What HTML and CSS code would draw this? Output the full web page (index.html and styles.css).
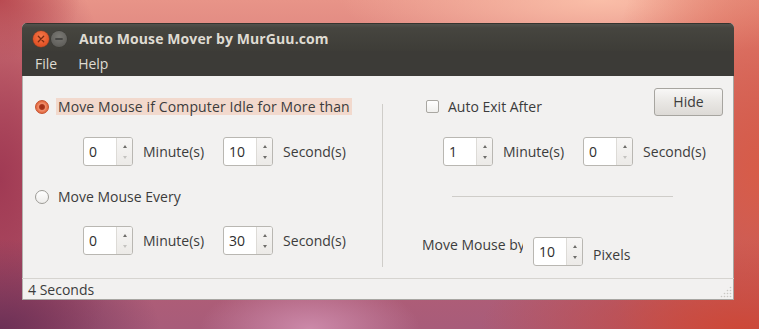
FILE: index.html
```html
<!DOCTYPE html>
<html>
<head>
<meta charset="utf-8">
<link rel="stylesheet" href="styles.css">
</head>
<body>
<div class="window">
  <div class="titlebar">
    <span class="wbtn close"><svg width="16" height="16" viewBox="0 0 16 16"><path d="M5.3 5.3 L10.7 10.7 M10.7 5.3 L5.3 10.7" stroke="#7a2a10" stroke-width="1.3" stroke-linecap="round"/></svg></span>
    <span class="wbtn min"><svg width="16" height="16" viewBox="0 0 16 16"><path d="M4.8 8 H11.2" stroke="#3a3a38" stroke-width="1.4" stroke-linecap="round"/></svg></span>
    <span class="title">Auto Mouse Mover by MurGuu.com</span>
  </div>
  <div class="menubar">
    <span class="menu">File</span>
    <span class="menu">Help</span>
  </div>
  <div class="content">
    <div class="left">
      <div class="opt">
        <span class="radio on"></span>
        <span class="lbl hl">Move Mouse if Computer Idle for More than</span>
      </div>
      <div class="spinrow">
        <span class="spin"><span class="val">0</span><span class="btns"><i class="up"></i><i class="dn off"></i></span></span>
        <span class="unit">Minute(s)</span>
        <span class="spin"><span class="val">10</span><span class="btns"><i class="up"></i><i class="dn"></i></span></span>
        <span class="unit">Second(s)</span>
      </div>
      <div class="opt opt2">
        <span class="radio"></span>
        <span class="lbl">Move Mouse Every</span>
      </div>
      <div class="spinrow spinrow2">
        <span class="spin"><span class="val">0</span><span class="btns"><i class="up"></i><i class="dn off"></i></span></span>
        <span class="unit">Minute(s)</span>
        <span class="spin"><span class="val">30</span><span class="btns"><i class="up"></i><i class="dn"></i></span></span>
        <span class="unit">Second(s)</span>
      </div>
    </div>
    <div class="vsep"></div>
    <div class="right">
      <div class="toprow">
        <span class="chk-group"><span class="check"></span><span class="lbl">Auto Exit After</span></span>
        <span class="button">Hide</span>
      </div>
      <div class="spinrow rspin">
        <span class="spin"><span class="val">1</span><span class="btns"><i class="up"></i><i class="dn"></i></span></span>
        <span class="unit">Minute(s)</span>
        <span class="spin"><span class="val">0</span><span class="btns"><i class="up"></i><i class="dn off"></i></span></span>
        <span class="unit">Second(s)</span>
      </div>
      <div class="hsep"></div>
      <div class="byrow">
        <span class="bylbl">Move Mouse by</span>
        <span class="spin"><span class="val">10</span><span class="btns"><i class="up"></i><i class="dn"></i></span></span>
        <span class="pix">Pixels</span>
      </div>
    </div>
  </div>
  <div class="status">
    <span class="stext">4 Seconds</span>
    <svg class="grip" width="12" height="12" viewBox="0 0 12 12">
      <g fill="#c9c7c3">
        <circle cx="10.5" cy="1.5" r="0.8"/>
        <circle cx="7.5" cy="4.5" r="0.8"/><circle cx="10.5" cy="4.5" r="0.8"/>
        <circle cx="4.5" cy="7.5" r="0.8"/><circle cx="7.5" cy="7.5" r="0.8"/><circle cx="10.5" cy="7.5" r="0.8"/>
        <circle cx="1.5" cy="10.5" r="0.8"/><circle cx="4.5" cy="10.5" r="0.8"/><circle cx="7.5" cy="10.5" r="0.8"/><circle cx="10.5" cy="10.5" r="0.8"/>
      </g>
    </svg>
  </div>
</div>
</body>
</html>
```

FILE: styles.css
```css
html, body {
  margin: 0;
  padding: 0;
}
body {
  width: 759px;
  height: 329px;
  overflow: hidden;
  font-family: "Open Sans", "DejaVu Sans", sans-serif;
  font-size: 14px;
  color: #3c3c3c;
  background:
    radial-gradient(ellipse 110px 50px at 310px 329px, rgba(206,140,172,0.95), rgba(206,140,172,0)),
    radial-gradient(ellipse 260px 90px at 740px 329px, rgba(205,72,56,1), rgba(205,72,56,0)),
    radial-gradient(ellipse 160px 90px at 0px 329px, rgba(108,48,86,1), rgba(108,48,86,0)),
    radial-gradient(ellipse 120px 260px at 0px 180px, rgba(160,58,84,1), rgba(160,58,84,0)),
    radial-gradient(ellipse 160px 300px at 759px 170px, rgba(215,92,72,1), rgba(215,92,72,0)),
    radial-gradient(ellipse 260px 60px at 600px 0px, rgba(250,190,168,1), rgba(250,190,168,0)),
    radial-gradient(ellipse 80px 60px at 0px 0px, rgba(196,82,80,1), rgba(196,82,80,0)),
    linear-gradient(180deg, #e89488 0%, #c4606a 50%, #a85c7a 100%);
}

.window {
  margin: 23px 0 0 22px;
  width: 712px;
  height: 277px;
  border-radius: 5px 5px 0 0;
  overflow: hidden;
  background: #f2f1f0;
  display: flex;
  flex-direction: column;
  box-shadow: inset -1px 0 0 #a9a7a3, inset 1px 0 0 #b3b1ad;
}

.titlebar {
  height: 28px;
  display: flex;
  align-items: center;
  padding-left: 11px;
  background: linear-gradient(180deg, #52514c 0px, #46453f 4px, #3d3c37 28px);
  border-top: 1px solid #35342f;
  box-sizing: border-box;
}
.wbtn {
  width: 16px;
  height: 16px;
  border-radius: 50%;
  display: flex;
  margin-top: 2px;
}
.close {
  background: radial-gradient(circle at 50% 35%, #f5794a 0, #e6572a 60%, #c9441d 100%);
  box-shadow: 0 0 0 0.5px #9a3a1a;
}
.min {
  margin-left: 2px;
  background: radial-gradient(circle at 50% 35%, #7a7974 0, #656460 60%, #55544f 100%);
  box-shadow: 0 0 0 0.5px #3a3935;
}
.title {
  margin-left: 12px;
  margin-top: 1px;
  font-weight: bold;
  font-size: 14px;
  color: #dfdbd2;
  letter-spacing: 0.1px;
}

.menubar {
  height: 25px;
  background: #3c3b37;
  display: flex;
  align-items: center;
  padding-left: 13px;
  gap: 21px;
  color: #dfdbd2;
  font-size: 14px;
}

.content {
  height: 202px;
  display: flex;
}
.left {
  width: 360px;
  padding-top: 22px;
  box-sizing: border-box;
}
.opt {
  display: flex;
  align-items: center;
  height: 17px;
  padding-left: 13px;
}
.opt2 {
  margin-top: 22px;
}
.radio {
  width: 12px;
  height: 12px;
  border-radius: 50%;
  border: 1px solid #9d9b96;
  background: linear-gradient(180deg, #ffffff, #eeedeb);
  margin-right: 7px;
  flex: none;
}
.radio.on {
  border-color: #c5512e;
  background: radial-gradient(circle at 50% 50%, #9e2c12 0, #a8341a 2.4px, #f1906e 3.6px, #e9774f 5px, #dc5e35 7px);
}
.lbl {
  line-height: 17px;
  white-space: nowrap;
  padding: 0 2px;
}
.hl {
  background: #f2d9cd;
  letter-spacing: 0.12px;
}

.spinrow {
  display: flex;
  align-items: center;
  margin-top: 22px;
  padding-left: 61px;
}
.spinrow2 {
  margin-top: 21px;
}
.spin {
  width: 50px;
  height: 29px;
  box-sizing: border-box;
  border: 1px solid #b9b7b2;
  border-radius: 3px;
  background: #fff;
  display: flex;
  overflow: hidden;
  flex: none;
}
.val {
  flex: 1;
  padding-left: 5px;
  line-height: 27px;
  font-size: 14px;
  color: #2e2e2e;
}
.btns {
  width: 16px;
  border-left: 1px solid #dddbd7;
  background: linear-gradient(180deg, #f7f6f5, #eceae7);
  display: flex;
  flex-direction: column;
  align-items: center;
  justify-content: space-between;
  padding: 7px 0 6px;
  box-sizing: border-box;
}
.btns i {
  display: block;
  width: 0;
  height: 0;
  border-left: 2.5px solid transparent;
  border-right: 2.5px solid transparent;
}
.btns .up {
  border-bottom: 3px solid #6e6d6a;
}
.btns .dn {
  border-top: 3px solid #6e6d6a;
}
.btns .dn.off {
  border-top-color: #c4c3c0;
}
.unit {
  margin-left: 10px;
  margin-right: 19px;
  white-space: nowrap;
}

.vsep {
  width: 1px;
  height: 163px;
  margin-top: 28px;
  background: #cfcdc9;
  flex: none;
}
.right {
  flex: 1;
  padding-top: 12px;
}
.toprow {
  display: flex;
  align-items: flex-start;
  height: 28px;
  padding-left: 43px;
  padding-right: 11px;
}
.chk-group {
  display: flex;
  align-items: center;
  margin-top: 10px;
}
.check {
  width: 11px;
  height: 11px;
  border: 1px solid #a9a7a2;
  border-radius: 2px;
  background: linear-gradient(180deg, #ffffff, #f0efed);
  margin-right: 7px;
}
.button {
  margin-left: auto;
  width: 69px;
  height: 28px;
  box-sizing: border-box;
  border: 1px solid #a7a5a0;
  border-radius: 3px;
  background: linear-gradient(180deg, #f8f7f6 0%, #e9e7e4 50%, #dddad6 100%);
  text-align: center;
  line-height: 26px;
  color: #3c3c3c;
}
.rspin {
  margin-top: 21px;
  padding-left: 60px;
}
.hsep {
  height: 1px;
  width: 221px;
  margin: 30px 0 0 69px;
  background: #cfcdc9;
}
.byrow {
  display: flex;
  align-items: flex-start;
  margin-top: 40px;
  padding-left: 39px;
}
.bylbl {
  width: 101px;
  overflow: hidden;
  white-space: nowrap;
  line-height: 17px;
  margin-top: -1px;
  margin-right: 10px;
}
.pix {
  margin-left: 10px;
  margin-top: 9px;
  line-height: 17px;
}

.status {
  flex: 1;
  border-top: 1px solid #d6d4d0;
  border-bottom: 1px solid #a8a6a2;
  display: flex;
  align-items: center;
  padding-left: 6px;
  position: relative;
}
.stext {
  line-height: 17px;
}
.grip {
  position: absolute;
  right: 2px;
  bottom: 1px;
}
```
